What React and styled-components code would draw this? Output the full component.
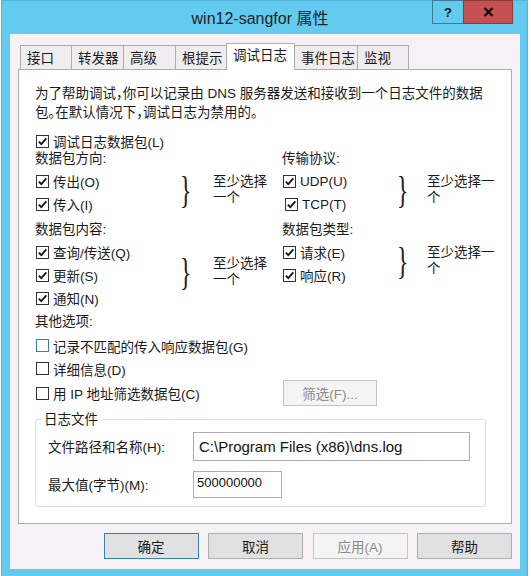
import React from "react";
import styled, { createGlobalStyle } from "styled-components";

const Global = createGlobalStyle`
  html, body { margin: 0; padding: 0; background: #ffffff; }
  body {
    font-family: "Liberation Sans", "Noto Sans CJK SC", sans-serif;
    font-size: 13.5px;
    color: #1a1a1a;
    font-feature-settings: "halt";
  }
  * { box-sizing: border-box; }
`;

const Window = styled.div`
  margin-left: 1px;
  width: 527px;
  height: 578px;
  background: #62cbef;
  border: 1px solid #4fb5dc;
  padding: 0 7px 8px 8px;
  display: flex;
  flex-direction: column;
`;

const TitleBar = styled.div`
  height: 33px;
  display: grid;
  grid-template-columns: 1fr auto 1fr;
  align-items: start;
`;

const Title = styled.div`
  grid-column: 2;
  padding: 8px 10px 0 0;
  font-size: 16px;
  line-height: 20px;
  color: #222;
`;

const Caption = styled.div`
  grid-column: 3;
  justify-self: end;
  margin: -1px 7px 0 0;
  display: flex;
`;

const CapButton = styled.div`
  width: ${(p) => p.$w}px;
  height: 24px;
  background: ${(p) => (p.$close ? "#c75050" : "#62cbef")};
  border: 1px solid ${(p) => (p.$close ? "#8e3a3a" : "#3a7b98")};
  margin-left: -1px;
  display: flex;
  align-items: center;
  justify-content: center;
  font-weight: bold;
  font-size: 13px;
  color: #111;
`;

const Client = styled.div`
  flex: 1;
  background: #f5f1f5;
  padding: 9px 8px 0 8px;
  display: flex;
  flex-direction: column;
`;

const TabStrip = styled.div`
  height: 26px;
  display: flex;
  align-items: flex-end;
  padding-left: 2px;
`;

const Tab = styled.div`
  position: relative;
  z-index: ${(p) => (p.$active ? 2 : 1)};
  width: ${(p) => p.$w}px;
  height: ${(p) => (p.$active ? 27 : 24)}px;
  margin-right: -1px;
  margin-bottom: ${(p) => (p.$active ? -1 : 0)}px;
  border: 1px solid #acacac;
  border-bottom: none;
  background: ${(p) => (p.$active ? "#ffffff" : "#f0edf0")};
  padding: ${(p) => (p.$active ? "0 0 2px 6px" : "2px 0 0 6px")};
  display: flex;
  align-items: center;
  line-height: 16px;
  white-space: nowrap;
`;

const Panel = styled.div`
  height: 455px;
  background: #ffffff;
  border: 1px solid #acacac;
  padding: 14px 16px 0 16px;
`;

const Description = styled.p`
  margin: 0;
  line-height: 19px;
`;

const CheckRow = styled.div`
  height: ${(p) => p.$h || 23}px;
  margin-top: ${(p) => p.$mt || 0}px;
  padding-left: ${(p) => p.$indent || 0}px;
  display: flex;
  align-items: center;
  gap: 4px;
  white-space: nowrap;
`;

const BoxFrame = styled.span`
  width: 13px;
  height: 13px;
  margin-left: 1px;
  flex: none;
  border: 1px solid ${(p) => (p.$focus ? "#3c7fb1" : "#333333")};
  background: #ffffff;
  display: flex;
  align-items: center;
  justify-content: center;
`;

const Check = ({ checked = true, focus = false }) => (
  <BoxFrame $focus={focus}>
    {checked && (
      <svg width="11" height="11" viewBox="0 0 11 11">
        <path d="M1.8 5.6 L4.3 8.2 L9.3 2.4" fill="none" stroke="#1a1a1a" strokeWidth="1.9" />
      </svg>
    )}
  </BoxFrame>
);

const Columns = styled.div`
  display: grid;
  grid-template-columns: 247px 1fr;
  align-items: start;
`;

const Column = styled.div`
  display: flex;
  flex-direction: column;
`;

const Heading = styled.div`
  line-height: 17px;
  margin-top: ${(p) => p.$mt || 0}px;
  margin-bottom: ${(p) => p.$mb ?? 2.5}px;
`;

const Group = styled.div`
  display: flex;
  align-items: center;
`;

const List = styled.div`
  width: ${(p) => p.$w}px;
  display: flex;
  flex-direction: column;
`;

const Brace = styled.span`
  width: 12px;
  margin-right: ${(p) => p.$gap}px;
  margin-bottom: 6px;
  font-family: "Liberation Serif", serif;
  font-size: 38px;
  line-height: 38px;
  color: #1a1a1a;
  transform: scaleX(0.62);
  transform-origin: left center;
`;

const Note = styled.div`
  width: ${(p) => p.$w}px;
  line-height: 16px;
  margin-bottom: 6px;
`;

const FilterRow = styled.div`
  display: grid;
  grid-template-columns: 247px auto;
  align-items: center;
  height: 23px;
`;

const PushButton = styled.div`
  width: ${(p) => p.$w || 95}px;
  height: 26px;
  margin-left: ${(p) => p.$ml || 0}px;
  display: flex;
  align-items: center;
  justify-content: center;
  background: ${(p) => (p.$disabled ? "#f4f4f4" : "#e1e1e1")};
  border: 1px solid
    ${(p) => (p.$default ? "#3c7fb1" : p.$disabled ? "#c4c4c4" : "#adadad")};
  color: ${(p) => (p.$disabled ? "#8a8a8a" : "#1a1a1a")};
  white-space: nowrap;
`;

const GroupBox = styled.fieldset`
  width: 451px;
  margin: 7.5px 0 0 0;
  padding: 3px 12px 8px 12px;
  border: 1px solid #d5dfe5;
  border-radius: 3px;
  display: flex;
  flex-direction: column;
  gap: 10px;
`;

const Legend = styled.legend`
  margin-left: -7px;
  padding: 0 3px;
  line-height: 18px;
`;

const FieldRow = styled.div`
  display: grid;
  grid-template-columns: 145px auto;
  align-items: center;
`;

const TextBox = styled.div`
  width: ${(p) => p.$w}px;
  height: ${(p) => p.$h}px;
  border: 1px solid #abadb3;
  background: #ffffff;
  font-size: ${(p) => p.$fs}px;
  line-height: ${(p) => p.$lh}px;
  padding: ${(p) => p.$pad};
  white-space: nowrap;
  color: #111;
`;

const ButtonBar = styled.div`
  margin-top: 9px;
  display: flex;
  justify-content: flex-end;
  gap: 9.5px;
`;

const tabs = [
  ["接口", 52],
  ["转发器", 53],
  ["高级", 53],
  ["根提示", 52],
  ["调试日志", 69, true],
  ["事件日志", 64],
  ["监视", 52],
];

export default function App() {
  return (
    <>
      <Global />
      <Window>
        <TitleBar>
          <Title>win12-sangfor 属性</Title>
          <Caption>
            <CapButton $w={32}>?</CapButton>
            <CapButton $w={50} $close>
              <svg width="11" height="10" viewBox="0 0 11 10">
                <path d="M1.5 1 L9.5 9 M9.5 1 L1.5 9" stroke="#111" strokeWidth="2.4" />
              </svg>
            </CapButton>
          </Caption>
        </TitleBar>
        <Client>
          <TabStrip>
            {tabs.map(([label, w, active]) => (
              <Tab key={label} $w={w} $active={active}>
                {label}
              </Tab>
            ))}
          </TabStrip>
          <Panel>
            <Description>
              为了帮助调试，你可以记录由 DNS 服务器发送和接收到一个日志文件的数据
              <br />
              包。在默认情况下，调试日志为禁用的。
            </Description>
            <CheckRow $h={18} $mt={10}>
              <Check />
              调试日志数据包(L)
            </CheckRow>
            <Columns>
              <Column>
                <Heading>数据包方向:</Heading>
                <Group>
                  <List $w={145}>
                    <CheckRow>
                      <Check />
                      传出(O)
                    </CheckRow>
                    <CheckRow>
                      <Check />
                      传入(I)
                    </CheckRow>
                  </List>
                  <Brace $gap={21}>{"}"}</Brace>
                  <Note $w={58}>至少选择一个</Note>
                </Group>
                <Heading $mt={5.5}>数据包内容:</Heading>
                <Group>
                  <List $w={145}>
                    <CheckRow>
                      <Check />
                      查询/传送(Q)
                    </CheckRow>
                    <CheckRow>
                      <Check />
                      更新(S)
                    </CheckRow>
                    <CheckRow>
                      <Check />
                      通知(N)
                    </CheckRow>
                  </List>
                  <Brace $gap={21}>{"}"}</Brace>
                  <Note $w={58}>至少选择一个</Note>
                </Group>
              </Column>
              <Column>
                <Heading>传输协议:</Heading>
                <Group>
                  <List $w={115}>
                    <CheckRow>
                      <Check />
                      UDP(U)
                    </CheckRow>
                    <CheckRow $indent={2}>
                      <Check />
                      TCP(T)
                    </CheckRow>
                  </List>
                  <Brace $gap={18}>{"}"}</Brace>
                  <Note $w={70}>至少选择一个</Note>
                </Group>
                <Heading $mt={5.5}>数据包类型:</Heading>
                <Group>
                  <List $w={115}>
                    <CheckRow>
                      <Check />
                      请求(E)
                    </CheckRow>
                    <CheckRow>
                      <Check />
                      响应(R)
                    </CheckRow>
                  </List>
                  <Brace $gap={18}>{"}"}</Brace>
                  <Note $w={70}>至少选择一个</Note>
                </Group>
              </Column>
            </Columns>
            <Heading $mt={3.5} $mb={4}>
              其他选项:
            </Heading>
            <CheckRow>
              <Check checked={false} focus />
              记录不匹配的传入响应数据包(G)
            </CheckRow>
            <CheckRow>
              <Check checked={false} />
              详细信息(D)
            </CheckRow>
            <FilterRow>
              <CheckRow>
                <Check checked={false} />
                用 IP 地址筛选数据包(C)
              </CheckRow>
              <PushButton $w={94} $ml={1} $disabled>
                筛选(F)...
              </PushButton>
            </FilterRow>
            <GroupBox>
              <Legend>日志文件</Legend>
              <FieldRow>
                <span>文件路径和名称(H):</span>
                <TextBox $w={277} $h={29} $fs={15} $lh={27} $pad="0 0 0 5px">
                  C:\Program Files (x86)\dns.log
                </TextBox>
              </FieldRow>
              <FieldRow>
                <span>最大值(字节)(M):</span>
                <TextBox $w={89} $h={27} $fs={13} $lh={15} $pad="3px 0 0 3px">
                  500000000
                </TextBox>
              </FieldRow>
            </GroupBox>
          </Panel>
          <ButtonBar>
            <PushButton $default>确定</PushButton>
            <PushButton>取消</PushButton>
            <PushButton $disabled>应用(A)</PushButton>
            <PushButton>帮助</PushButton>
          </ButtonBar>
        </Client>
      </Window>
    </>
  );
}
